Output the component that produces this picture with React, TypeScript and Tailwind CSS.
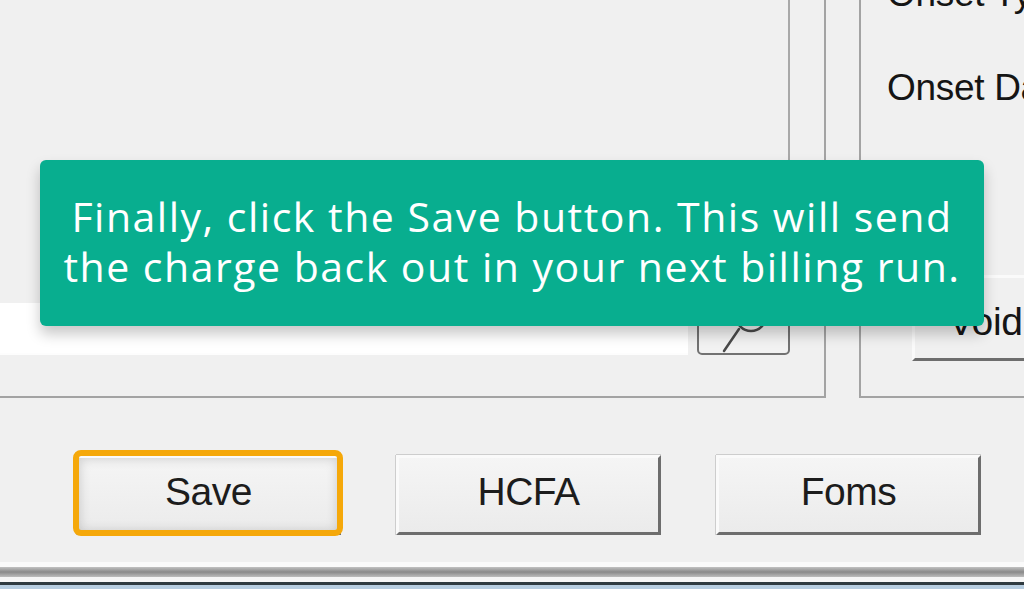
function WinButton({ label, focused }: { label: string; focused?: boolean }) {
  return (
    <div className="relative">
      <div
        className={`flex h-[80px] w-[265px] items-center justify-center border-[3px] border-t-[#fafafa] border-l-[#fafafa] border-r-[#6d6d6d] border-b-[#6d6d6d] bg-gradient-to-b from-[#f5f5f5] to-[#ebebeb] pb-[6px] text-[39px] tracking-[-0.5px] text-[#1c1c1c] ${
          focused ? "shadow-[inset_0_0_12px_rgba(0,0,0,0.18)]" : "shadow-[0_-1px_0_#cdcdcd,-1px_0_0_#cdcdcd]"
        }`}
      >
        {label}
      </div>
      {focused && (
        <div className="absolute -left-[3px] -right-[2px] -top-[5px] -bottom-[1px] rounded-[8px] border-[6px] border-[#f5a80a]"></div>
      )}
    </div>
  );
}

export default function App() {
  return (
    <div className="relative flex h-[589px] w-[1024px] flex-col overflow-hidden bg-[#f0f0f0] font-['Liberation_Sans',Arial,sans-serif]">
      {/* group boxes */}
      <div className="flex h-[398px]">
        <div className="flex w-[826px] shrink-0 flex-col border-r-2 border-b-2 border-[#a3a3a3]">
          <div className="h-[270px] w-[790px] border-r-2 border-[#a8a8a8]"></div>
          <div className="mt-[30px] flex items-end">
            <div className="h-[52px] w-[688px] border-b-2 border-[#fdfdfd] bg-white"></div>
            <div className="ml-[9px] h-[55px] w-[93px] rounded-[5px] border-2 border-[#727272] bg-[#f2f2f2]">
              <svg width="89" height="51" viewBox="0 0 89 51" fill="none" stroke="#4a4a4a" strokeWidth="2.5" strokeLinecap="round">
                <circle cx="52" cy="14" r="15" />
                <path d="M25 49 L40 27" />
              </svg>
            </div>
          </div>
        </div>
        <div className="w-[33px] shrink-0"></div>
        <div className="flex min-w-0 flex-1 flex-col overflow-hidden border-l-2 border-b-2 border-[#a3a3a3] pl-[26px] text-[37px] leading-none tracking-[-0.3px] text-[#151515]">
          <div className="-mt-[25px] whitespace-nowrap">Onset Type</div>
          <div className="mt-[57px] whitespace-nowrap">Onset Date</div>
          <div className="ml-[25px] mt-[169px] h-[86px] w-[200px] shrink-0 whitespace-nowrap border-[3px] border-t-[#fafafa] border-l-[#fafafa] border-r-[#6d6d6d] border-b-[#6d6d6d] bg-[#f0f0f0] pl-[33px] pt-[24px] text-[39px]">
            Void...
          </div>
        </div>
      </div>

      {/* buttons */}
      <div className="mt-[57px] flex gap-[55px] pl-[76px]">
        <WinButton label="Save" focused />
        <WinButton label="HCFA" />
        <WinButton label="Foms" />
      </div>

      {/* window frame bottom */}
      <div className="mt-[27px] flex flex-col">
        <div className="h-[5px] bg-[#fafafa]"></div>
        <div className="h-[10px] bg-gradient-to-b from-[#c2c2c2] via-[#8a8a8a] to-[#bdbdbd]"></div>
        <div className="h-[5px] bg-[#f6f6f6]"></div>
        <div className="h-[3px] bg-[#2f3a40]"></div>
        <div className="h-[4px] bg-[#b7cde0]"></div>
      </div>

      {/* tutorial callout */}
      <div className="absolute left-[40px] top-[160px] flex h-[166px] w-[944px] flex-col items-center justify-center rounded-[6px] bg-[#08ae8f] pb-[4px] text-center font-['Open_Sans',sans-serif] text-[41px] font-medium leading-[50px] tracking-[1.5px] text-white shadow-[0_8px_14px_rgba(0,0,0,0.22)]">
        <div className="whitespace-nowrap">Finally, click the Save button. This will send</div>
        <div className="whitespace-nowrap">the charge back out in your next billing run.</div>
      </div>
    </div>
  );
}
